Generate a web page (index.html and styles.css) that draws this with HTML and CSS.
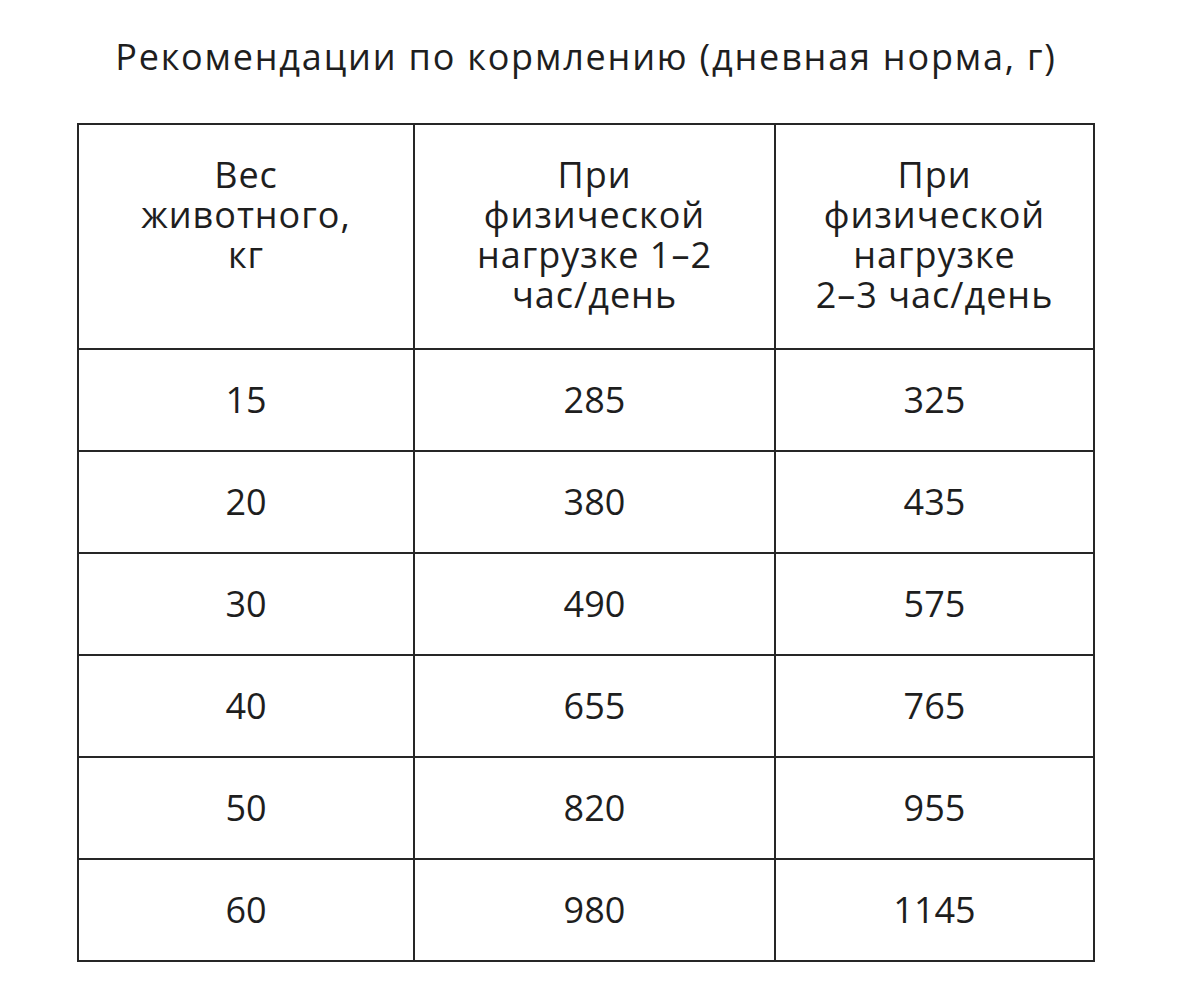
FILE: index.html
```html
<!DOCTYPE html>
<html lang="ru">
<head>
<meta charset="utf-8">
<link rel="stylesheet" href="styles.css">
</head>
<body>
<div class="page">
  <h1 class="title">Рекомендации по кормлению (дневная норма, г)</h1>
  <table class="feed">
    <colgroup>
      <col class="c1"><col class="c2"><col class="c3">
    </colgroup>
    <thead>
      <tr>
        <th>Вес<br>животного,<br>кг</th>
        <th>При<br>физической<br>нагрузке 1–2<br>час/день</th>
        <th>При<br>физической<br>нагрузке<br>2–3 час/день</th>
      </tr>
    </thead>
    <tbody>
      <tr><td>15</td><td>285</td><td>325</td></tr>
      <tr><td>20</td><td>380</td><td>435</td></tr>
      <tr><td>30</td><td>490</td><td>575</td></tr>
      <tr><td>40</td><td>655</td><td>765</td></tr>
      <tr><td>50</td><td>820</td><td>955</td></tr>
      <tr><td>60</td><td>980</td><td>1145</td></tr>
    </tbody>
  </table>
</div>
</body>
</html>
```
FILE: styles.css
```css
html, body {
  margin: 0;
  padding: 0;
  background: #ffffff;
}
.page {
  width: 1200px;
  font-family: "Open Sans", "Noto Sans", sans-serif;
  color: #1e1e1e;
  padding-top: 33px;
}
.title {
  margin: 0;
  width: 1172px;
  font-size: 36px;
  font-weight: 400;
  line-height: 48px;
  letter-spacing: 1.8px;
  text-align: center;
}
.feed {
  margin: 42px 0 0 77px;
  border-collapse: collapse;
  table-layout: fixed;
  width: 1016px;
}
.c1 { width: 336px; }
.c2 { width: 361px; }
.c3 { width: 319px; }
.feed th, .feed td {
  border: 2px solid #262626;
  text-align: center;
  font-size: 36px;
  font-weight: 400;
  padding: 0;
}
.feed th {
  height: 225px;
  vertical-align: top;
  line-height: 40px;
  letter-spacing: 1px;
  padding-top: 30px;
  box-sizing: border-box;
}
.feed td {
  height: 100px;
  vertical-align: middle;
  line-height: 40px;
}
```
